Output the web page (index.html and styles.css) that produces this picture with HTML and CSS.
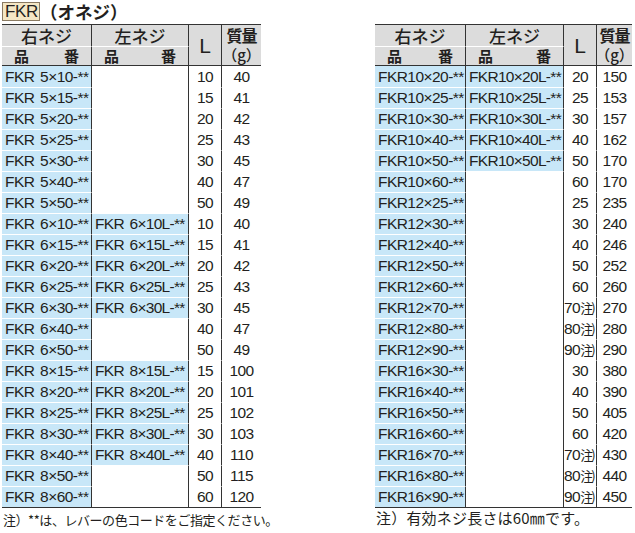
FILE: index.html
```html
<!DOCTYPE html>
<html lang="ja">
<head>
<meta charset="utf-8">
<link rel="stylesheet" href="styles.css">
</head>
<body>
<div class="page">
  <h1 class="title"><span class="code">FKR</span><span class="kind">（オネジ）</span></h1>
  <div class="cols">
    <div class="col col-left">
      <table class="spec">
        <colgroup><col class="c1"><col class="c2"><col class="c3"><col class="c4"></colgroup>
        <thead>
          <tr class="h1"><th>右ネジ</th><th>左ネジ</th><th rowspan="2" class="hl">L</th><th rowspan="2" class="hm"><span class="hm1">質量</span><span class="hm2">（g）</span></th></tr>
          <tr class="h2"><th><span class="pn"><span>品</span><span>番</span></span></th><th><span class="pn"><span>品</span><span>番</span></span></th></tr>
        </thead>
        <tbody>
          <tr><td class="b">FKR 5×10-**</td><td rowspan="7" class="e"></td><td class="l">10</td><td class="m">40</td></tr>
          <tr><td class="b">FKR 5×15-**</td><td class="l">15</td><td class="m">41</td></tr>
          <tr><td class="b">FKR 5×20-**</td><td class="l">20</td><td class="m">42</td></tr>
          <tr><td class="b">FKR 5×25-**</td><td class="l">25</td><td class="m">43</td></tr>
          <tr><td class="b">FKR 5×30-**</td><td class="l">30</td><td class="m">45</td></tr>
          <tr><td class="b">FKR 5×40-**</td><td class="l">40</td><td class="m">47</td></tr>
          <tr><td class="b">FKR 5×50-**</td><td class="l">50</td><td class="m">49</td></tr>
          <tr><td class="b">FKR 6×10-**</td><td class="b b2">FKR 6×10L-**</td><td class="l">10</td><td class="m">40</td></tr>
          <tr><td class="b">FKR 6×15-**</td><td class="b b2">FKR 6×15L-**</td><td class="l">15</td><td class="m">41</td></tr>
          <tr><td class="b">FKR 6×20-**</td><td class="b b2">FKR 6×20L-**</td><td class="l">20</td><td class="m">42</td></tr>
          <tr><td class="b">FKR 6×25-**</td><td class="b b2">FKR 6×25L-**</td><td class="l">25</td><td class="m">43</td></tr>
          <tr><td class="b">FKR 6×30-**</td><td class="b b2">FKR 6×30L-**</td><td class="l">30</td><td class="m">45</td></tr>
          <tr><td class="b">FKR 6×40-**</td><td rowspan="2" class="e"></td><td class="l">40</td><td class="m">47</td></tr>
          <tr><td class="b">FKR 6×50-**</td><td class="l">50</td><td class="m">49</td></tr>
          <tr><td class="b">FKR 8×15-**</td><td class="b b2">FKR 8×15L-**</td><td class="l">15</td><td class="m">100</td></tr>
          <tr><td class="b">FKR 8×20-**</td><td class="b b2">FKR 8×20L-**</td><td class="l">20</td><td class="m">101</td></tr>
          <tr><td class="b">FKR 8×25-**</td><td class="b b2">FKR 8×25L-**</td><td class="l">25</td><td class="m">102</td></tr>
          <tr><td class="b">FKR 8×30-**</td><td class="b b2">FKR 8×30L-**</td><td class="l">30</td><td class="m">103</td></tr>
          <tr><td class="b">FKR 8×40-**</td><td class="b b2">FKR 8×40L-**</td><td class="l">40</td><td class="m">110</td></tr>
          <tr><td class="b">FKR 8×50-**</td><td rowspan="2" class="e"></td><td class="l">50</td><td class="m">115</td></tr>
          <tr><td class="b">FKR 8×60-**</td><td class="l">60</td><td class="m">120</td></tr>
        </tbody>
      </table>
      <p class="note">注）**は、レバーの色コードをご指定ください。</p>
    </div>
    <div class="col col-right">
      <table class="spec">
        <colgroup><col class="r1"><col class="r2"><col class="r3"><col class="r4"></colgroup>
        <thead>
          <tr class="h1"><th>右ネジ</th><th>左ネジ</th><th rowspan="2" class="hl">L</th><th rowspan="2" class="hm"><span class="hm1">質量</span><span class="hm2">（g）</span></th></tr>
          <tr class="h2"><th><span class="pn"><span>品</span><span>番</span></span></th><th><span class="pn"><span>品</span><span>番</span></span></th></tr>
        </thead>
        <tbody>
          <tr><td class="b">FKR10×20-**</td><td class="b b2">FKR10×20L-**</td><td class="l">20</td><td class="m">150</td></tr>
          <tr><td class="b">FKR10×25-**</td><td class="b b2">FKR10×25L-**</td><td class="l">25</td><td class="m">153</td></tr>
          <tr><td class="b">FKR10×30-**</td><td class="b b2">FKR10×30L-**</td><td class="l">30</td><td class="m">157</td></tr>
          <tr><td class="b">FKR10×40-**</td><td class="b b2">FKR10×40L-**</td><td class="l">40</td><td class="m">162</td></tr>
          <tr><td class="b">FKR10×50-**</td><td class="b b2">FKR10×50L-**</td><td class="l">50</td><td class="m">170</td></tr>
          <tr><td class="b">FKR10×60-**</td><td rowspan="16" class="e"></td><td class="l">60</td><td class="m">170</td></tr>
          <tr><td class="b">FKR12×25-**</td><td class="l">25</td><td class="m">235</td></tr>
          <tr><td class="b">FKR12×30-**</td><td class="l">30</td><td class="m">240</td></tr>
          <tr><td class="b">FKR12×40-**</td><td class="l">40</td><td class="m">246</td></tr>
          <tr><td class="b">FKR12×50-**</td><td class="l">50</td><td class="m">252</td></tr>
          <tr><td class="b">FKR12×60-**</td><td class="l">60</td><td class="m">260</td></tr>
          <tr><td class="b">FKR12×70-**</td><td class="l ln">70<span class="cn">注)</span></td><td class="m">270</td></tr>
          <tr><td class="b">FKR12×80-**</td><td class="l ln">80<span class="cn">注)</span></td><td class="m">280</td></tr>
          <tr><td class="b">FKR12×90-**</td><td class="l ln">90<span class="cn">注)</span></td><td class="m">290</td></tr>
          <tr><td class="b">FKR16×30-**</td><td class="l">30</td><td class="m">380</td></tr>
          <tr><td class="b">FKR16×40-**</td><td class="l">40</td><td class="m">390</td></tr>
          <tr><td class="b">FKR16×50-**</td><td class="l">50</td><td class="m">405</td></tr>
          <tr><td class="b">FKR16×60-**</td><td class="l">60</td><td class="m">420</td></tr>
          <tr><td class="b">FKR16×70-**</td><td class="l ln">70<span class="cn">注)</span></td><td class="m">430</td></tr>
          <tr><td class="b">FKR16×80-**</td><td class="l ln">80<span class="cn">注)</span></td><td class="m">440</td></tr>
          <tr><td class="b">FKR16×90-**</td><td class="l ln">90<span class="cn">注)</span></td><td class="m">450</td></tr>
        </tbody>
      </table>
      <p class="note note-r">注）有効ネジ長さは60㎜です。</p>
    </div>
  </div>
</div>
</body>
</html>
```
FILE: styles.css
```css
html, body {
  margin: 0;
  padding: 0;
  background: #fff;
}
body {
  color: #231f20;
  font-family: "Liberation Sans", "Noto Sans CJK JP", sans-serif;
}
.page {
  width: 635px;
  padding: 2px 0 0 2px;
  box-sizing: border-box;
}
.title {
  margin: 0 0 4px 0;
  height: 18px;
  display: flex;
  align-items: center;
  font-weight: normal;
}
.title .code {
  display: inline-block;
  height: 17px;
  line-height: 17px;
  padding: 0 1px 0 2px;
  background: #f4e6c4;
  border: 1px solid #8a7a62;
  font-family: "Liberation Sans", sans-serif;
  font-size: 17px;
  letter-spacing: -0.3px;
}
.title .kind {
  font-family: "Noto Sans CJK JP", sans-serif;
  font-size: 17.5px;
  font-weight: 700;
}
.cols {
  display: flex;
  gap: 114px;
}
.col-left { width: 259px; }
.col-right { width: 257px; }
.spec {
  border-collapse: separate;
  border-spacing: 0;
  table-layout: fixed;
  width: 100%;
  border-bottom: 1px solid #333;
}
.c1 { width: 90px; }
.c2 { width: 97px; }
.c3 { width: 33px; }
.c4 { width: 39px; }
.r1 { width: 91px; }
.r2 { width: 98px; }
.r3 { width: 33px; }
.r4 { width: 35px; }
.spec th {
  background: #dcdcdc;
  font-family: "Noto Sans CJK JP", sans-serif;
  font-weight: 500;
  font-size: 17px;
  padding: 0;
  border-right: 1px solid #333;
  text-align: center;
}
.spec th:last-child,
.spec td:last-child {
  border-right: none;
}
.spec .h1 th {
  border-top: 1px solid #333;
  line-height: 21px;
}
.spec .h2 th {
  border-top: 1px solid #fff;
  border-bottom: 1px solid #333;
  line-height: 18px;
  font-weight: 700;
  font-size: 15px;
}
.spec .h2 th:last-child { border-right: 1px solid #333; }
.spec .hl,
.spec .hm {
  border-bottom: 1px solid #333;
}
.spec .hl {
  font-family: "Liberation Sans", sans-serif;
  font-size: 21px;
  font-weight: normal;
}
.spec .hm {
  font-weight: 700;
  white-space: nowrap;
}
.hm1,
.hm2 {
  display: flex;
  justify-content: center;
  height: 19px;
  line-height: 19px;
  font-size: 16px;
}
.hm1 { letter-spacing: -1px; }
.hm2 {
  font-size: 15px;
  font-weight: 500;
}
.pn {
  display: flex;
  justify-content: space-between;
  padding: 0 12px 0 12px;
}
.spec td {
  padding: 0;
  height: 20px;
  line-height: 20px;
  font-size: 15.5px;
  letter-spacing: -0.55px;
  border-top: 1px solid #fff;
  border-right: 1px solid #333;
  white-space: nowrap;
  overflow: hidden;
}
.spec tbody tr:first-child td { border-top: none; height: 21px; }
.spec td.b {
  background: #c8e7f8;
  padding-left: 3px;
  word-spacing: 2px;
}
.spec td.b2 {
  padding-left: 3px;
  letter-spacing: -0.7px;
}
.spec td.e { background: #fff; }
.spec td.l,
.spec td.m {
  text-align: center;
}
.spec td.ln {
  text-align: left;
  padding-left: 0;
}
.cn {
  font-family: "Noto Sans CJK JP", sans-serif;
  font-size: 13px;
  letter-spacing: -2px;
}
.note {
  margin: 3px 0 0 1px;
  font-family: "Noto Sans CJK JP", sans-serif;
  font-size: 13px;
  line-height: 18px;
  letter-spacing: -0.45px;
  white-space: nowrap;
}
.note-r {
  font-size: 15px;
  letter-spacing: 0.2px;
  margin-top: 1px;
}
```
